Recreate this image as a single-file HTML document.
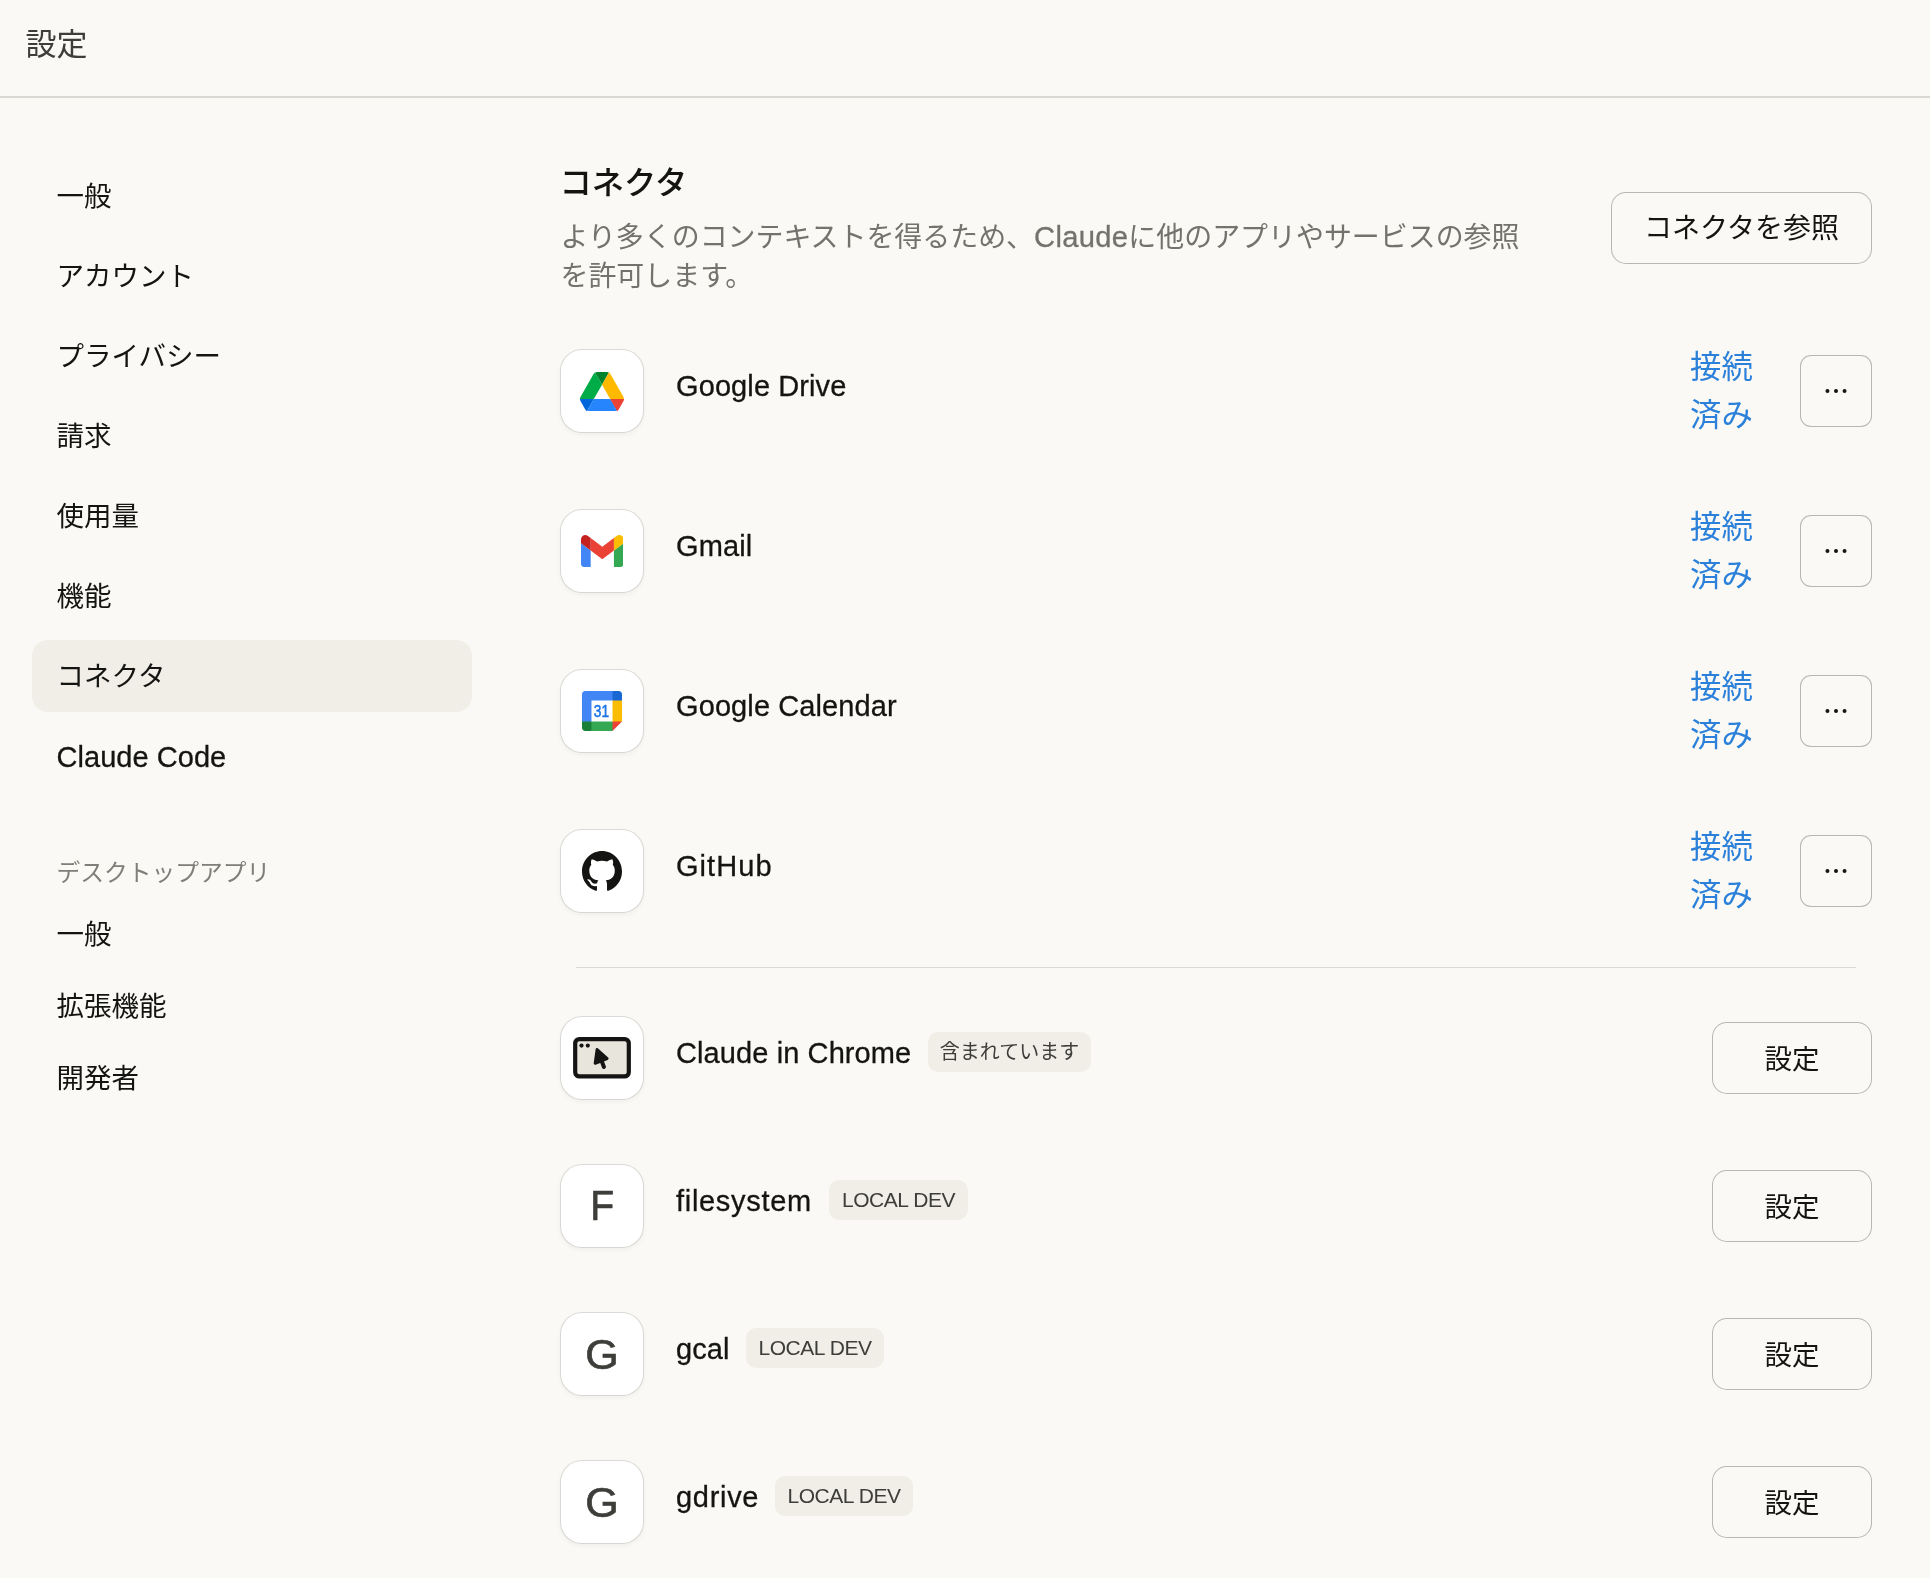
<!DOCTYPE html>
<html lang="ja">
<head>
<meta charset="utf-8">
<title>設定</title>
<style>
*{box-sizing:border-box;margin:0;padding:0}
html{width:1930px;height:1578px;overflow:hidden;background:#faf9f5}
body{width:1930px;height:1578px;overflow:hidden;background:transparent;will-change:transform}
body{position:relative;font-family:"Liberation Sans","Noto Sans CJK JP",sans-serif;color:#141413;font-size:28px;line-height:1}
.abs{position:absolute;white-space:nowrap}
.hdr{left:25.5px;top:21px;font-size:31px;line-height:48px;color:#3d3d3a}
.hline{left:0;top:96px;width:1930px;height:2px;background:#d8d7d2}
.nav{left:56.5px;font-size:27.5px;line-height:40px;color:#141413}
.lat{font-size:29px;letter-spacing:0.04px;-webkit-text-stroke:0.3px}
.sel{left:32px;top:640px;width:440px;height:72px;border-radius:16px;background:#f0eee6}
.sec{left:56.5px;font-size:23.75px;line-height:32px;color:#7f7e78}
.title{left:559.5px;top:158.5px;font-size:32.3px;line-height:48px;font-weight:500;color:#141413}
.desc{left:560.5px;top:218px;width:972px;font-size:27.95px;line-height:39px;color:#73726c;white-space:normal}
.btn{border:1px solid rgba(31,30,29,.3);border-radius:11px;display:flex;align-items:center;justify-content:center;font-size:28px;color:#141413;background:#faf9f5}
.ico{left:560px;width:84px;height:84px;border-radius:22px;background:#fff;border:1px solid rgba(31,30,29,.13);background-clip:padding-box;box-shadow:0 2px 4px rgba(0,0,0,.045);display:flex;align-items:center;justify-content:center}
.ico svg{display:block;position:absolute}
.name{left:676px;font-size:29px;letter-spacing:0.1px;line-height:40px;color:#141413;-webkit-text-stroke:0.3px}
.conn{left:1690px;font-size:31.4px;line-height:47.6px;color:#2b80d9;width:64px;white-space:normal}
.badge{height:40px;border-radius:10px;background:#f0eee6;color:#3d3d3a;font-size:20px;line-height:40px;text-align:center;width:139px}
.badge.ld{font-size:21px;letter-spacing:-0.45px}
.divider{left:576px;top:967px;width:1280px;height:1px;background:#dad9d4}
.letter{font-size:43px;line-height:1;color:#3d3d3a;font-weight:400;-webkit-text-stroke:0.7px #3d3d3a;position:absolute}
</style>
</head>
<body>
<div class="abs hdr">設定</div>
<div class="abs hline"></div>

<div class="abs sel"></div>
<div class="abs nav" style="top:177px">一般</div>
<div class="abs nav" style="top:257px">アカウント</div>
<div class="abs nav" style="top:337px">プライバシー</div>
<div class="abs nav" style="top:417px">請求</div>
<div class="abs nav" style="top:497px">使用量</div>
<div class="abs nav" style="top:577px">機能</div>
<div class="abs nav" style="top:657px">コネクタ</div>
<div class="abs nav" style="top:737px"><span class="lat">Claude Code</span></div>
<div class="abs sec" style="top:857px">デスクトップアプリ</div>
<div class="abs nav" style="top:915px">一般</div>
<div class="abs nav" style="top:987px">拡張機能</div>
<div class="abs nav" style="top:1059px">開発者</div>

<div class="abs title">コネクタ</div>
<div class="abs desc">より多くのコンテキストを得るため、<span class="lat" style="font-size:29.2px;letter-spacing:0.3px">Claude</span>に他のアプリやサービスの参照を許可します。</div>
<div class="abs btn" style="left:1611px;top:192px;width:261px;height:72px;border-radius:15px;padding-top:2px;font-size:28px">コネクタを参照</div>

<!-- connected rows -->
<div class="abs ico" style="top:349px"><svg style="left:19px;top:21.6px" width="44" height="39.8" viewBox="0 0 87.3 78" preserveAspectRatio="none"><path d="m6.6 66.85 3.85 6.65c.8 1.4 1.950 2.500 3.300 3.300l13.750-23.800h-27.500c0 1.550.4 3.100 1.200 4.500z" fill="#0066da"/><path d="m43.650 25-13.750-23.800c-1.350.8-2.500 1.900-3.300 3.300l-25.400 44a9.060 9.060 0 0 0 -1.200 4.500h27.500z" fill="#00ac47"/><path d="m73.550 76.800c1.350-.8 2.500-1.900 3.300-3.300l1.600-2.750 7.650-13.250c.8-1.400 1.200-2.950 1.200-4.500h-27.502l5.852 11.500z" fill="#ea4335"/><path d="m43.650 25 13.750-23.800c-1.350-.8-2.900-1.200-4.500-1.200h-18.500c-1.600 0-3.150.45-4.500 1.200z" fill="#00832d"/><path d="m59.800 53h-32.300l-13.750 23.800c1.350.8 2.900 1.200 4.500 1.200h50.800c1.600 0 3.150-.45 4.500-1.200z" fill="#2684fc"/><path d="m73.400 26.500-12.700-22c-.8-1.400-1.950-2.500-3.300-3.300l-13.750 23.800 16.150 28h27.450c0-1.550-.4-3.100-1.200-4.500z" fill="#ffba00"/></svg></div>
<div class="abs name" style="top:366px">Google Drive</div>
<div class="abs conn" style="top:344px">接続済み</div>
<div class="abs btn" style="left:1800px;top:355px;width:72px;height:72px"><svg width="26" height="8" viewBox="0 0 26 8"><circle cx="4.45" cy="4" r="2" fill="#141413"/><circle cx="13" cy="4" r="2" fill="#141413"/><circle cx="21.55" cy="4" r="2" fill="#141413"/></svg></div>

<div class="abs ico" style="top:509px"><svg style="left:19.7px;top:24.8px" width="42.6" height="32" viewBox="52 42 88 66"><path fill="#4285f4" d="M58 108h14V74L52 59v43c0 3.320 2.690 6 6 6"/><path fill="#34a853" d="M120 108h14c3.320 0 6-2.690 6-6V59l-20 15"/><path fill="#fbbc04" d="M120 48v26l20-15v-8c0-7.420-8.470-11.650-14.400-7.200"/><path fill="#ea4335" d="M72 74V48l24 18 24-18v26L96 92"/><path fill="#c5221f" d="M52 51v8l20 15V48l-5.600-4.200c-5.940-4.450-14.400-.22-14.400 7.200"/></svg></div>
<div class="abs name" style="top:526px">Gmail</div>
<div class="abs conn" style="top:504px">接続済み</div>
<div class="abs btn" style="left:1800px;top:515px;width:72px;height:72px"><svg width="26" height="8" viewBox="0 0 26 8"><circle cx="4.45" cy="4" r="2" fill="#141413"/><circle cx="13" cy="4" r="2" fill="#141413"/><circle cx="21.55" cy="4" r="2" fill="#141413"/></svg></div>

<div class="abs ico" style="top:669px"><svg style="left:21.3px;top:21px" width="40" height="40" viewBox="0 0 200 200"><g transform="translate(3.75 3.75)"><path fill="#fff" d="M148.882 43.618l-47.368-5.263-57.895 5.263L38.355 96.250l5.263 52.632 52.632 6.579 52.632-6.579 5.263-53.947z"/><path fill="#ea4335" d="M148.882 196.250l47.368-47.368-23.684-10.526-23.684 10.526-10.526 23.684z"/><path fill="#34a853" d="M33.092 172.566l10.526 23.684h105.263v-47.368H43.618z"/><path fill="#4285f4" d="M12.039-3.750C3.316-3.750-3.750 3.316-3.750 12.039v136.842l23.684 10.526 23.684-10.526V43.618h105.263l10.526-23.684L148.882-3.750z"/><path fill="#188038" d="M-3.750 148.882v31.579c0 8.724 7.066 15.789 15.789 15.789h31.579v-47.368z"/><path fill="#fbbc04" d="M148.882 43.618v105.263h47.368V43.618l-23.684-10.526z"/><path fill="#1967d2" d="M196.250 43.618V12.039c0-8.724-7.066-15.789-15.789-15.789h-31.579v47.368z"/><text x="93.500" y="126.500" text-anchor="middle" font-family="Liberation Sans, sans-serif" font-weight="400" font-size="83" fill="#1a73e8" stroke="#1a73e8" stroke-width="2.5" textLength="76" lengthAdjust="spacingAndGlyphs">31</text></g></svg></div>
<div class="abs name" style="top:686px">Google Calendar</div>
<div class="abs conn" style="top:664px">接続済み</div>
<div class="abs btn" style="left:1800px;top:675px;width:72px;height:72px"><svg width="26" height="8" viewBox="0 0 26 8"><circle cx="4.45" cy="4" r="2" fill="#141413"/><circle cx="13" cy="4" r="2" fill="#141413"/><circle cx="21.55" cy="4" r="2" fill="#141413"/></svg></div>

<div class="abs ico" style="top:829px"><svg style="left:21px;top:21px" width="40" height="40.8" viewBox="0 0 16 16" preserveAspectRatio="none"><path fill="#141413" d="M8 0C3.580 0 0 3.580 0 8c0 3.540 2.290 6.530 5.470 7.590.4.070.55-.17.55-.38 0-.19-.01-.82-.01-1.490-2.010.37-2.530-.49-2.690-.94-.09-.23-.48-.94-.82-1.130-.28-.15-.68-.52-.01-.53.63-.01 1.080.58 1.230.82.720 1.210 1.870.87 2.330.66.070-.52.280-.87.510-1.070-1.780-.2-3.640-.89-3.640-3.950 0-.87.310-1.590.82-2.150-.08-.2-.36-1.020.08-2.120 0 0 .67-.21 2.200.82.640-.18 1.320-.27 2-.27s1.360.09 2 .27c1.530-1.040 2.200-.82 2.200-.82.440 1.100.16 1.920.08 2.120.51.560.82 1.270.82 2.150 0 3.070-1.870 3.750-3.650 3.950.29.250.54.730.54 1.480 0 1.070-.01 1.930-.01 2.200 0 .21.150.46.550.38A8.013 8.013 0 0016 8c0-4.420-3.580-8-8-8z"/></svg></div>
<div class="abs name" style="top:846px;letter-spacing:1.05px">GitHub</div>
<div class="abs conn" style="top:824px">接続済み</div>
<div class="abs btn" style="left:1800px;top:835px;width:72px;height:72px"><svg width="26" height="8" viewBox="0 0 26 8"><circle cx="4.45" cy="4" r="2" fill="#141413"/><circle cx="13" cy="4" r="2" fill="#141413"/><circle cx="21.55" cy="4" r="2" fill="#141413"/></svg></div>

<div class="abs divider"></div>

<!-- local rows -->
<div class="abs ico" style="top:1016px"><svg style="left:0;top:0" width="82" height="82" viewBox="0 0 82 82"><rect x="14.200" y="22.100" width="53.600" height="37.300" rx="4.200" fill="#e8e6dc" stroke="#141413" stroke-width="4.200"/><circle cx="20.500" cy="28.600" r="2.100" fill="#141413"/><circle cx="26.800" cy="28.600" r="2.100" fill="#141413"/><polygon points="36.100,32.500 46.100,41.600 34.200,46.300" fill="#141413" stroke="#141413" stroke-width="3" stroke-linejoin="round"/><line x1="40.400" y1="43.200" x2="42.900" y2="50.000" stroke="#141413" stroke-width="4" stroke-linecap="round"/></svg></div>
<div class="abs name" style="top:1033px">Claude in Chrome</div>
<div class="abs badge" style="left:928px;top:1032px;width:163px;line-height:41px">含まれています</div>
<div class="abs btn" style="left:1712px;top:1022px;width:160px;height:72px;border-radius:15px;padding-top:3px;font-size:27.5px">設定</div>

<div class="abs ico" style="top:1164px"><span class="letter" style="transform:scaleX(.91);margin-top:-0.5px">F</span></div>
<div class="abs name" style="top:1181px;letter-spacing:0.7px">filesystem</div>
<div class="abs badge ld" style="left:829px;top:1180px">LOCAL DEV</div>
<div class="abs btn" style="left:1712px;top:1170px;width:160px;height:72px;border-radius:15px;padding-top:3px;font-size:27.5px">設定</div>

<div class="abs ico" style="top:1312px"><span class="letter">G</span></div>
<div class="abs name" style="top:1329px">gcal</div>
<div class="abs badge ld" style="left:746px;top:1328px;width:138px">LOCAL DEV</div>
<div class="abs btn" style="left:1712px;top:1318px;width:160px;height:72px;border-radius:15px;padding-top:3px;font-size:27.5px">設定</div>

<div class="abs ico" style="top:1460px"><span class="letter">G</span></div>
<div class="abs name" style="top:1477px;letter-spacing:0.7px">gdrive</div>
<div class="abs badge ld" style="left:775px;top:1476px;width:138px">LOCAL DEV</div>
<div class="abs btn" style="left:1712px;top:1466px;width:160px;height:72px;border-radius:15px;padding-top:3px;font-size:27.5px">設定</div>
</body>
</html>
